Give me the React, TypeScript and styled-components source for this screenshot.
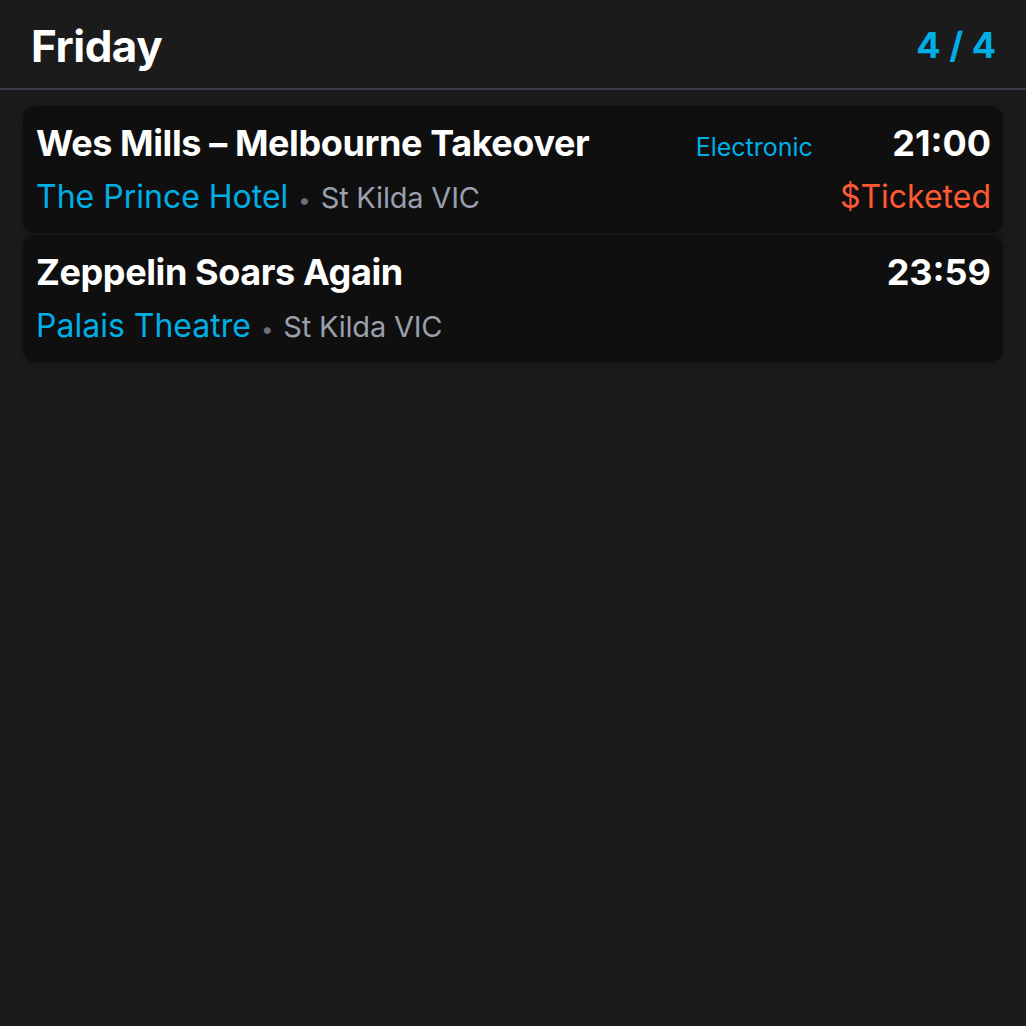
import React from 'react'
import styled, { createGlobalStyle } from 'styled-components'

const GlobalStyle = createGlobalStyle`
  html, body {
    margin: 0;
    padding: 0;
    background: #1b1b1b;
  }
  body {
    font-family: Inter, "Noto Sans", sans-serif;
    color: #ffffff;
  }
`

const Page = styled.div`
  min-height: 1026px;
  background: #1b1b1b;
`

const Header = styled.header`
  display: flex;
  align-items: center;
  justify-content: space-between;
  height: 88px;
  padding: 0 31px;
  border-bottom: 2px solid #3a3e48;
`

const Day = styled.h1`
  margin: 0;
  font-size: 44px;
  font-weight: 700;
  letter-spacing: -0.5px;
  margin-top: 4px;
`

const Count = styled.span`
  font-size: 36px;
  font-weight: 700;
  color: #00aee6;
  margin-top: 2px;
  margin-right: -1px;
`

const List = styled.div`
  display: flex;
  flex-direction: column;
  gap: 2px;
  padding: 16px 23px;
`

const Card = styled.div`
  display: flex;
  align-items: flex-start;
  gap: 27px;
  height: 127px;
  box-sizing: border-box;
  padding: 15px 12px 0 13px;
  background: #0f0f0f;
  border-radius: 12px;
  box-shadow: 0 2px 8px rgba(0, 0, 0, 0.25);
`

const Main = styled.div`
  flex: 1;
  display: flex;
  flex-direction: column;
  gap: 10px;
  min-width: 0;
`

const Title = styled.div`
  font-size: 36px;
  font-weight: 700;
  line-height: 44px;
  letter-spacing: -0.4px;
`

const Venue = styled.div`
  display: flex;
  align-items: baseline;
  gap: 10px;
  font-size: 32px;
  line-height: 44px;
`

const VenueName = styled.span`
  color: #00aee6;
`

const Place = styled.span`
  color: #9a9fac;
  font-size: 29px;
  letter-spacing: -0.2px;
`

const Dot = styled.span`
  color: #6c707a;
  font-size: 22px;
`

const Genre = styled.div`
  font-size: 25px;
  line-height: 44px;
  color: #00aee6;
  margin-top: 4px;
`

const Side = styled.div`
  display: flex;
  flex-direction: column;
  align-items: flex-end;
  gap: 10px;
`

const Time = styled.div`
  font-size: 36px;
  font-weight: 700;
  line-height: 44px;
`

const Price = styled.div`
  font-size: 32px;
  line-height: 44px;
  color: #ff5a34;
`

type Event = {
  title: string
  venue: string
  place: string
  time: string
  genre?: string
  price?: string
}

const events: Event[] = [
  {
    title: 'Wes Mills – Melbourne Takeover',
    venue: 'The Prince Hotel',
    place: 'St Kilda VIC',
    time: '21:00',
    genre: 'Electronic',
    price: '$Ticketed',
  },
  {
    title: 'Zeppelin Soars Again',
    venue: 'Palais Theatre',
    place: 'St Kilda VIC',
    time: '23:59',
  },
]

const App = () => {
  return (
    <Page>
      <GlobalStyle />
      <Header>
        <Day>Friday</Day>
        <Count>4 / 4</Count>
      </Header>
      <List>
        {events.map((e) => (
          <Card key={e.title}>
            <Main>
              <Title>{e.title}</Title>
              <Venue>
                <VenueName>{e.venue}</VenueName>
                <Dot>•</Dot>
                <Place>{e.place}</Place>
              </Venue>
            </Main>
            {e.genre && <Genre>{e.genre}</Genre>}
            <Side>
              <Time>{e.time}</Time>
              {e.price && <Price>{e.price}</Price>}
            </Side>
          </Card>
        ))}
      </List>
    </Page>
  )
}

export default App
